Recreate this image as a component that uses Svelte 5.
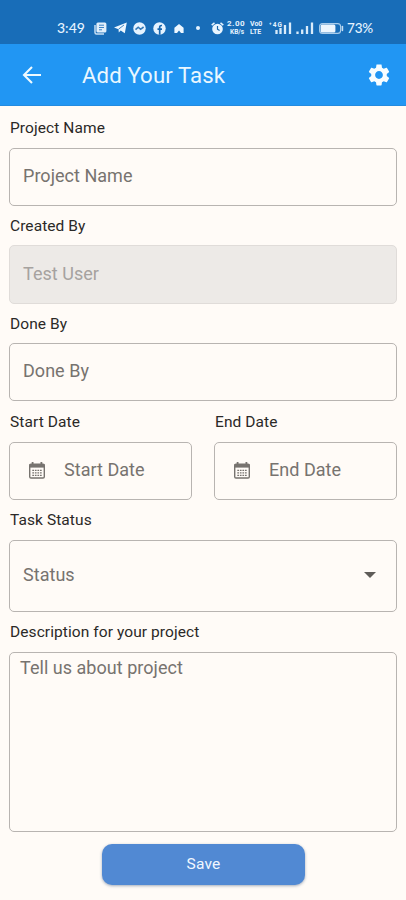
<script>
  const gear = 'M19.14 12.94c.04-.3.06-.61.06-.94 0-.32-.02-.64-.07-.94l2.03-1.58c.18-.14.23-.41.12-.61l-1.92-3.32c-.12-.22-.37-.29-.59-.22l-2.39.96c-.5-.38-1.03-.7-1.62-.94l-.36-2.54c-.04-.24-.24-.41-.48-.41h-3.84c-.24 0-.43.17-.47.41l-.36 2.54c-.59.24-1.13.57-1.62.94l-2.39-.96c-.22-.08-.47 0-.59.22L2.74 8.87c-.12.21-.08.47.12.61l2.03 1.58c-.05.3-.09.63-.09.94s.02.64.07.94l-2.03 1.58c-.18.14-.23.41-.12.61l1.92 3.32c.12.22.37.29.59.22l2.39-.96c.5.38 1.03.7 1.62.94l.36 2.54c.05.24.24.41.48.41h3.84c.24 0 .44-.17.47-.41l.36-2.54c.59-.24 1.13-.56 1.62-.94l2.39.96c.22.08.47 0 .59-.22l1.92-3.32c.12-.22.07-.47-.12-.61l-2.01-1.58zM12 15.6c-1.98 0-3.6-1.62-3.6-3.6s1.62-3.6 3.6-3.6 3.6 1.62 3.6 3.6-1.62 3.6-3.6 3.6z';
</script>

{#snippet calendar()}
  <svg class="calendar" width="18" height="19" viewBox="0 0 18 19">
    <path d="M4.6 1v3M13.4 1v3" stroke="#77736f" stroke-width="1.8" />
    <rect x="1.7" y="3.2" width="14.6" height="13.8" rx="1.3" fill="none" stroke="#77736f" stroke-width="1.4" />
    <path d="M1.5 3h15v3.6h-15z" fill="#77736f" />
    <path d="M4.3 9.3h9.4M4.3 11.8h9.4M4.3 14.3h9.4" stroke="#77736f" stroke-width="1.3" stroke-dasharray="1.7 .87" />
  </svg>
{/snippet}

<div class="screen">
  <div class="status">
    <span class="time">3:49</span>
    <svg style:margin-left="9px" width="13" height="13" viewBox="0 0 13 13">
      <rect x="2.4" y=".5" width="10" height="10" rx="1.5" fill="#e1effb" />
      <path d="M1 3v7.5Q1 12 2.5 12H10" fill="none" stroke="#c5def3" stroke-width="1.5" />
      <path d="M5 3.2h5M5 5.5h5M5 7.8h3" stroke="#3b82c4" stroke-width="1" />
    </svg>
    <svg style:margin-left="7px" width="13" height="12" viewBox="0 0 13 12">
      <path d="M0 5.6 12.8.5 10.8 11.3 6.7 8.5 4.8 10.5 4.5 7.2Z" fill="#edf7ff" />
      <path d="M4.5 7.2 10 3" stroke="#186bb5" stroke-width=".8" />
    </svg>
    <svg style:margin-left="6px" width="13" height="13" viewBox="0 0 13 13">
      <circle cx="6.5" cy="6.5" r="6.2" fill="#e5f3ff" />
      <path d="M2.5 7.6 5.2 5.2 7.6 7.3 10.6 5" fill="none" stroke="#3479b8" stroke-width="1.6" />
    </svg>
    <svg style:margin-left="7px" width="13" height="13" viewBox="0 0 13 13">
      <circle cx="6.5" cy="6.5" r="6.2" fill="#e5f3ff" />
      <path d="M6.7 12.7V5.2Q6.7 3.3 9 3.5M4.5 7.2H9" fill="none" stroke="#1766ae" stroke-width="1.7" />
    </svg>
    <svg style:margin-left="8px" width="10" height="11" viewBox="0 0 10 11">
      <path d="M.4 4.7 5 1l4.6 3.7V10H7L5 7.4 3 10H.4Z" fill="#edf7ff" />
    </svg>
    <i class="dot"></i>
    <svg style:margin-left="11px" width="13" height="13" viewBox="0 0 13 13">
      <circle cx="6.5" cy="7" r="5.3" fill="#e8f5ff" />
      <path d="M.7 3.2 3.5.9M12.3 3.2 9.5.9" stroke="#e8f5ff" stroke-width="1.5" />
      <path d="M6.5 4v3.2L8.6 8.5" fill="none" stroke="#1c68ab" stroke-width="1.2" />
    </svg>
    <span class="tiny speed"><b>2.00</b><b>KB/s</b></span>
    <span class="tiny volte"><b>Vo0</b><b>LTE</b></span>
    <svg style:margin-left="4px" width="24" height="14" viewBox="0 0 24 14">
      <text x="0" y="5.6" font-size="6.5" font-weight="700" fill="#e5f3ff" textLength="13">⁺4G</text>
      <path d="M7.5 13V9M11.5 13V7M16 13V4M21 13V1.6" stroke="#d8ebfa" stroke-width="2.3" />
    </svg>
    <svg style:margin-left="3px" width="18" height="14" viewBox="0 0 18 14">
      <path d="M1.5 13v-2.5M6.2 13V8.5M11 13V5M16 13V1.6" stroke="#d8ebfa" stroke-width="2.3" />
    </svg>
    <svg style:margin-left="5px" width="25" height="13" viewBox="0 0 25 13">
      <rect x=".6" y="1.6" width="21" height="9.8" rx="3" fill="none" stroke="#a9cdec" stroke-width="1.1" />
      <rect x="1.6" y="2.6" width="14.8" height="7.8" rx="1.5" fill="#edf6fe" />
      <path d="M23.4 4.5v4" stroke="#c6def2" stroke-width="1.6" stroke-linecap="round" />
    </svg>
    <span class="pct">73%</span>
  </div>

  <header>
    <svg class="back" width="24" height="24" viewBox="0 0 24 24">
      <path d="M21 12H4.3M12 4 4 12l8 8" fill="none" stroke="#eefaff" stroke-width="2.1" />
    </svg>
    <h1>Add Your Task</h1>
    <svg class="gear" width="26" height="26" viewBox="0 0 24 24"><path d={gear} fill="#f8fdff" /></svg>
  </header>

  <main>
    <div class="label first">Project Name</div>
    <div class="box">Project Name</div>
    <div class="label short">Created By</div>
    <div class="box disabled">Test User</div>
    <div class="label short">Done By</div>
    <div class="box">Done By</div>
    <div class="dates">
      <div>
        <div class="label">Start Date</div>
        <div class="box date">{@render calendar()}Start Date</div>
      </div>
      <div>
        <div class="label">End Date</div>
        <div class="box date">{@render calendar()}End Date</div>
      </div>
    </div>
    <div class="label">Task Status</div>
    <div class="box select">Status<i class="caret"></i></div>
    <div class="label desc">Description for your project</div>
    <div class="box area">Tell us about project</div>
    <button>Save</button>
  </main>
</div>

<style>
  :global(body) { margin: 0; background: #fffbf7; }
  .screen {
    width: 406px;
    height: 900px;
    overflow: hidden;
    background: #fffbf7;
    font-family: Roboto, sans-serif;
    box-sizing: border-box;
  }
  .screen * { box-sizing: border-box; }
  svg { flex: none; display: block; }
  .status {
    height: 44px;
    padding: 12px 0 0 57px;
    display: flex;
    align-items: center;
    background: #186db8;
    color: #e5f3ff;
    white-space: nowrap;
  }
  .time, .pct { font: 500 14px/18px Lato, sans-serif; flex: none; }
  .time { width: 28px; }
  .pct { margin-left: 3px; font-size: 13.5px; letter-spacing: -.2px; }
  .dot { width: 4px; height: 4px; flex: none; margin-left: 12px; border-radius: 50%; background: #e5f3ff; }
  .tiny { display: flex; flex-direction: column; flex: none; color: #e5f3ff; }
  .tiny b { font: 700 7px/8px Roboto, sans-serif; }
  .speed { width: 20px; margin-left: 3px; }
  .speed b:first-child { font-size: 8px; letter-spacing: .5px; }
  .speed b + b { font-size: 6.5px; padding-left: 3px; }
  .volte { width: 15px; margin-left: 3px; }
  header {
    height: 62px;
    display: flex;
    align-items: center;
    padding: 1px 14px 0 20px;
    background: #2196f3;
    border-bottom: 1px solid #238be0;
  }
  h1 { margin: 0 0 0 38px; flex: 1; font-size: 22.2px; line-height: 28px; font-weight: 400; color: #e9f7ff; letter-spacing: .1px; }
  main { padding: 0 9px; display: flex; flex-direction: column; }
  .label { height: 40px; padding-left: 1px; font-size: 15.5px; line-height: 40px; color: #2b2927; letter-spacing: .08px; white-space: nowrap; }
  .label.first { height: 42px; line-height: 45px; }
  .label.short { height: 39px; }
  .label.desc { line-height: 41px; }
  .box {
    height: 58px;
    padding: 0 13px 2px;
    display: flex;
    align-items: center;
    border: 1px solid #b8b4b1;
    border-radius: 5px;
    font-size: 18px;
    line-height: 22px;
    letter-spacing: .03px;
    color: #77736f;
    white-space: nowrap;
  }
  .disabled { height: 59px; background: #edeae7; border-color: #e0dcd9; color: #a6a29f; }
  .dates { display: flex; gap: 22px; margin-top: 1px; }
  .dates > div { flex: 1; }
  .date { padding-left: 18px; }
  .calendar { margin-right: 18px; }
  .select { height: 72px; justify-content: space-between; padding-right: 20px; }
  .caret { border: 6px solid transparent; border-top-color: #5f5c59; border-bottom: 0; }
  .area { height: 180px; align-items: flex-start; padding: 4px 10px; }
  button {
    width: 203px;
    height: 41px;
    margin: 12px 0 0 93px;
    padding: 0 0 1px;
    border: 0;
    border-radius: 10px;
    background: #5189d3;
    color: #f0f7ff;
    font: 400 15.5px/20px Roboto, sans-serif;
    letter-spacing: .2px;
    box-shadow: 0 1px 3px #28466f70;
  }
</style>
